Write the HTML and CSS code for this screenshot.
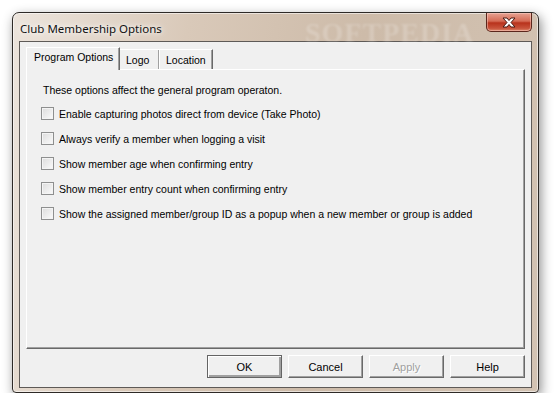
FILE: index.html
```html
<!DOCTYPE html>
<html lang="en">

<head>
    <meta charset="UTF-8">
    <title>Club Membership Options</title>
    <link rel="stylesheet" href="styles.css">
</head>

<body>
    <div class="window">
        <div class="titlebar">
            <span class="title">Club Membership Options</span>
            <span class="watermark">SOFTPEDIA</span>
            <button class="close" aria-label="Close">
                <svg width="16" height="11" viewBox="0 0 16 11">
                    <path d="M2 1 H6 L8 3.5 L10 1 H14 L10 5.5 L14 10 H10 L8 7.5 L6 10 H2 L6 5.5 Z"
                        fill="#fff" stroke="#4a1a12" stroke-width="1" stroke-linejoin="round" />
                </svg>
            </button>
        </div>

        <div class="client">
            <div class="tabs">
                <div class="tab active">Program Options</div>
                <div class="tab">Logo</div>
                <div class="tab">Location</div>
            </div>

            <div class="panel">
                <p class="intro">These options affect the general program operaton.</p>

                <label class="option"><span class="box"></span>Enable capturing photos direct from device (Take Photo)</label>
                <label class="option"><span class="box"></span>Always verify a member when logging a visit</label>
                <label class="option"><span class="box"></span>Show member age when confirming entry</label>
                <label class="option"><span class="box"></span>Show member entry count when confirming entry</label>
                <label class="option"><span class="box"></span>Show the assigned member/group ID as a popup when a new member or group is added</label>
            </div>

            <div class="buttons">
                <button class="btn default">OK</button>
                <button class="btn">Cancel</button>
                <button class="btn disabled">Apply</button>
                <button class="btn">Help</button>
            </div>
        </div>
    </div>
</body>

</html>
```

FILE: styles.css
```css
body {
    margin: 0;
    background-color: #fff;
    font-family: "Liberation Sans", Arial, sans-serif;
    font-size: 10.5px;
    color: #000;
}

.window {
    position: relative;
    box-sizing: border-box;
    width: 527px;
    height: 381px;
    margin: 12px 0 0 12px;
    padding: 0 6px 4px 6px;
    border: 1px solid #2e2a27;
    border-radius: 7px 7px 4px 4px;
    background: linear-gradient(100deg, #ece4dc 0%, #d9c9b9 30%, #cdbba9 60%, #d3c3b3 100%);
    box-shadow: 2px 4px 12px rgba(0, 0, 0, 0.45), inset 0 0 0 1px rgba(255, 255, 255, 0.55);
    display: flex;
    flex-direction: column;
}

.titlebar {
    height: 28px;
    display: flex;
    align-items: flex-start;
    justify-content: space-between;
}

.title {
    font-family: "Noto Sans", "Open Sans", sans-serif;
    font-size: 11.5px;
    margin: 8px 0 0 1px;
    color: #111;
    text-shadow: 0 0 8px #fff, 0 0 4px #fff;
}

.watermark {
    position: absolute;
    left: 292px;
    top: 4px;
    font-family: "Liberation Serif", serif;
    font-weight: bold;
    font-size: 28px;
    letter-spacing: 1px;
    color: rgba(255, 255, 255, 0.2);
    filter: blur(1.2px);
}

.close {
    width: 46px;
    height: 19px;
    padding: 0;
    border: 1px solid #5b261c;
    border-top: none;
    border-radius: 0 0 5px 5px;
    background: linear-gradient(#e6a292 0%, #d56b55 45%, #b8321c 55%, #c9543c 85%, #dd8a6e 100%);
    box-shadow: inset 0 0 0 1px rgba(255, 220, 210, 0.45);
    display: flex;
    align-items: center;
    justify-content: center;
}

.client {
    flex: 1;
    box-sizing: border-box;
    border: 1px solid #5e5a57;
    background-color: #f0f0f0;
    padding: 5px 6px 0 6px;
    display: flex;
    flex-direction: column;
}

.tabs {
    display: flex;
    align-items: flex-end;
    height: 22px;
}

.tab {
    box-sizing: border-box;
    height: 20px;
    padding: 4px 6px 0 6px;
    white-space: nowrap;
    border: 1px solid #fff;
    border-bottom: none;
    border-right: 1px solid #696969;
    box-shadow: inset -1px 0 0 #a0a0a0;
    margin-left: -1px;
    background-color: #f0f0f0;
}

.tab.active {
    position: relative;
    width: 94px;
    height: 23px;
    padding: 3px 0 0 7px;
    margin: 0 0 -1px 0;
    z-index: 1;
}

.tabs .tab:nth-child(2) {
    width: 41px;
}

.tabs .tab:nth-child(3) {
    width: 54px;
}

.panel {
    box-sizing: border-box;
    height: 280px;
    border: 1px solid #fff;
    border-right-color: #696969;
    border-bottom-color: #696969;
    box-shadow: inset -1px -1px 0 #a0a0a0;
    padding: 13px 0 0 14px;
}

.intro {
    margin: 0 0 10px 2px;
    line-height: 14px;
}

.option {
    display: flex;
    align-items: center;
    height: 13px;
    margin-bottom: 12px;
}

.box {
    box-sizing: border-box;
    width: 13px;
    height: 13px;
    margin-right: 5px;
    border: 1px solid #8e8f8f;
    background: linear-gradient(135deg, #dcdcdc, #fbfbfb);
    box-shadow: inset 0 0 0 1px #f4f4f4;
}

.buttons {
    display: flex;
    justify-content: flex-end;
    gap: 6px;
    padding-top: 6px;
}

.btn {
    box-sizing: border-box;
    width: 75px;
    height: 23px;
    padding: 0;
    font-family: "Liberation Sans", Arial, sans-serif;
    font-size: 11px;
    color: #000;
    background-color: #f0f0f0;
    border: 1px solid #fff;
    border-right-color: #696969;
    border-bottom-color: #696969;
    box-shadow: inset -1px -1px 0 #a0a0a0;
}

.btn.default {
    border: 1px solid #646464;
    box-shadow: inset 1px 1px 0 #fff, inset -2px -2px 0 #a0a0a0;
}

.btn.disabled {
    color: #a0a0a0;
    text-shadow: 1px 1px 0 #fff;
}
```
